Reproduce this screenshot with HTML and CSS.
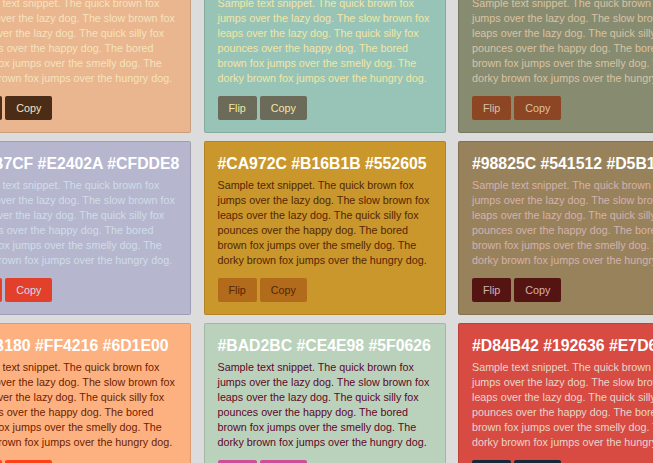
FILE: index.html
```html
<!DOCTYPE html>
<html>
<head>
<meta charset="utf-8">
<link rel="stylesheet" href="styles.css">
</head>
<body>
<div class="grid">
  <div class="card c1">
    <h2 class="title">#E9B68F #4B2C17 #F5E3BE</h2>
    <p class="text">Sample text snippet. The quick brown fox jumps over the lazy dog. The slow brown fox leaps over the lazy dog. The quick silly fox pounces over the happy dog. The bored brown fox jumps over the smelly dog. The dorky brown fox jumps over the hungry dog.</p>
    <div class="actions"><button class="btn">Flip</button><button class="btn">Copy</button></div>
  </div>
  <div class="card c2">
    <h2 class="title">#98C4B8 #6C6A58 #F2E6A2</h2>
    <p class="text">Sample text snippet. The quick brown fox jumps over the lazy dog. The slow brown fox leaps over the lazy dog. The quick silly fox pounces over the happy dog. The bored brown fox jumps over the smelly dog. The dorky brown fox jumps over the hungry dog.</p>
    <div class="actions"><button class="btn">Flip</button><button class="btn">Copy</button></div>
  </div>
  <div class="card c3">
    <h2 class="title">#878C70 #8C4623 #D9C2A3</h2>
    <p class="text">Sample text snippet. The quick brown fox jumps over the lazy dog. The slow brown fox leaps over the lazy dog. The quick silly fox pounces over the happy dog. The bored brown fox jumps over the smelly dog. The dorky brown fox jumps over the hungry dog.</p>
    <div class="actions"><button class="btn">Flip</button><button class="btn">Copy</button></div>
  </div>
  <div class="card c4">
    <h2 class="title">#B6B7CF #E2402A #CFDDE8</h2>
    <p class="text">Sample text snippet. The quick brown fox jumps over the lazy dog. The slow brown fox leaps over the lazy dog. The quick silly fox pounces over the happy dog. The bored brown fox jumps over the smelly dog. The dorky brown fox jumps over the hungry dog.</p>
    <div class="actions"><button class="btn">Flip</button><button class="btn">Copy</button></div>
  </div>
  <div class="card c5">
    <h2 class="title">#CA972C #B16B1B #552605</h2>
    <p class="text">Sample text snippet. The quick brown fox jumps over the lazy dog. The slow brown fox leaps over the lazy dog. The quick silly fox pounces over the happy dog. The bored brown fox jumps over the smelly dog. The dorky brown fox jumps over the hungry dog.</p>
    <div class="actions"><button class="btn">Flip</button><button class="btn">Copy</button></div>
  </div>
  <div class="card c6">
    <h2 class="title">#98825C #541512 #D5B1AE</h2>
    <p class="text">Sample text snippet. The quick brown fox jumps over the lazy dog. The slow brown fox leaps over the lazy dog. The quick silly fox pounces over the happy dog. The bored brown fox jumps over the smelly dog. The dorky brown fox jumps over the hungry dog.</p>
    <div class="actions"><button class="btn">Flip</button><button class="btn">Copy</button></div>
  </div>
  <div class="card c7">
    <h2 class="title">#FDB180 #FF4216 #6D1E00</h2>
    <p class="text">Sample text snippet. The quick brown fox jumps over the lazy dog. The slow brown fox leaps over the lazy dog. The quick silly fox pounces over the happy dog. The bored brown fox jumps over the smelly dog. The dorky brown fox jumps over the hungry dog.</p>
    <div class="actions"><button class="btn">Flip</button><button class="btn">Copy</button></div>
  </div>
  <div class="card c8">
    <h2 class="title">#BAD2BC #CE4E98 #5F0626</h2>
    <p class="text">Sample text snippet. The quick brown fox jumps over the lazy dog. The slow brown fox leaps over the lazy dog. The quick silly fox pounces over the happy dog. The bored brown fox jumps over the smelly dog. The dorky brown fox jumps over the hungry dog.</p>
    <div class="actions"><button class="btn">Flip</button><button class="btn">Copy</button></div>
  </div>
  <div class="card c9">
    <h2 class="title">#D84B42 #192636 #E7D6CB</h2>
    <p class="text">Sample text snippet. The quick brown fox jumps over the lazy dog. The slow brown fox leaps over the lazy dog. The quick silly fox pounces over the happy dog. The bored brown fox jumps over the smelly dog. The dorky brown fox jumps over the hungry dog.</p>
    <div class="actions"><button class="btn">Flip</button><button class="btn">Copy</button></div>
  </div>
</div>
</body>
</html>
```

FILE: styles.css
```css
html, body {
  margin: 0;
  padding: 0;
  background: #dcdcdc;
  overflow: hidden;
}
body {
  font-family: "Liberation Sans", Arial, sans-serif;
}
.grid {
  display: grid;
  grid-template-columns: repeat(3, 242px);
  column-gap: 12.5px;
  row-gap: 8px;
  margin-top: -41px;
  margin-left: -51px;
  width: 760px;
}
.card {
  box-sizing: border-box;
  height: 174px;
  border: 1px solid rgba(0, 0, 0, 0.13);
  border-radius: 2px;
  padding: 12px 13px 12px 13px;
  display: flex;
  flex-direction: column;
  background: var(--bg);
  color: var(--fg);
}
.title {
  margin: 0 0 4px 0;
  font-size: 15.8px;
  line-height: 20px;
  font-weight: bold;
  color: #ffffff;
  white-space: nowrap;
}
.text {
  margin: 0;
  font-size: 10.75px;
  line-height: 15px;
  height: 90px;
  color: var(--fg);
}
.actions {
  display: flex;
  gap: 3px;
  margin-top: 10px;
}
.btn {
  height: 24px;
  padding: 0 11px;
  border: none;
  border-radius: 2px;
  font-family: "Liberation Sans", Arial, sans-serif;
  font-size: 10.75px;
  background: var(--btn);
  color: var(--fg);
}
.c1 { --bg: #e9b68f; --btn: #4b2c17; --fg: #f5e3be; }
.c2 { --bg: #98c4b8; --btn: #6c6a58; --fg: #f2e6a2; }
.c3 { --bg: #878c70; --btn: #8c4623; --fg: #d9c2a3; }
.c4 { --bg: #b6b7cf; --btn: #e2402a; --fg: #cfdde8; }
.c5 { --bg: #ca972c; --btn: #b16b1b; --fg: #552605; }
.c6 { --bg: #98825c; --btn: #541512; --fg: #d5b1ae; }
.c7 { --bg: #fdb180; --btn: #ff4216; --fg: #6d1e00; }
.c8 { --bg: #bad2bc; --btn: #ce4e98; --fg: #5f0626; }
.c9 { --bg: #d84b42; --btn: #192636; --fg: #e7d6cb; }
```
